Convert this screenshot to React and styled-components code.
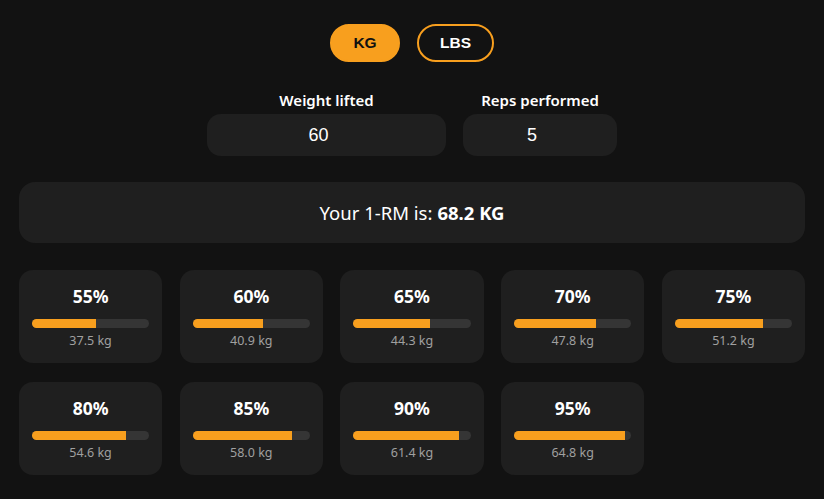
import React, { useState } from 'react';
import styled, { createGlobalStyle } from 'styled-components';

const GlobalStyle = createGlobalStyle`
  html, body {
    margin: 0;
    padding: 0;
    background-color: #121212;
  }
  body {
    font-family: "Noto Sans", "Open Sans", sans-serif;
    color: #ffffff;
  }
`;

const ORANGE = '#f89f1e';
const PERCENTAGES = [55, 60, 65, 70, 75, 80, 85, 90, 95];

// Lander formula
const estimateOneRm = (w, r) => {
  if (!w || !r) return 0;
  if (r === 1) return w;
  return (100 * w) / (101.3 - 2.67123 * r);
};

const Page = styled.div`
  padding: 24px 19px 24px 19px;
  min-height: 499px;
  box-sizing: border-box;
`;

const UnitToggle = styled.div`
  display: flex;
  justify-content: center;
  gap: 17px;
`;

const UnitButton = styled.button`
  height: 38px;
  width: ${props => props.width}px;
  border-radius: 19px;
  border: 2px solid ${ORANGE};
  background-color: ${props => (props.active ? ORANGE : 'transparent')};
  color: ${props => (props.active ? '#111111' : '#ffffff')};
  font-family: "Liberation Sans", Arial, sans-serif;
  font-weight: bold;
  font-size: 15.5px;
  cursor: pointer;
  padding: 0;
`;

const InputRow = styled.div`
  display: flex;
  justify-content: center;
  gap: 17px;
  margin-top: 28px;
`;

const Field = styled.label`
  display: flex;
  flex-direction: column;
  align-items: center;
  width: ${props => props.width}px;
`;

const FieldLabel = styled.span`
  font-size: 15px;
  font-weight: 600;
  line-height: 20px;
  margin-bottom: 4px;
`;

const NumberInput = styled.input`
  width: 100%;
  height: 42px;
  box-sizing: border-box;
  border: none;
  border-radius: 14px;
  background-color: #1f1f1f;
  color: #ffffff;
  text-align: center;
  padding: 0 16px 0 0;
  font-family: "Liberation Sans", Arial, sans-serif;
  font-size: 18px;
  outline: none;
`;

const Result = styled.div`
  margin-top: 26px;
  height: 61px;
  border-radius: 16px;
  background-color: #1f1f1f;
  display: flex;
  align-items: center;
  justify-content: center;
  font-size: 18.5px;
`;

const ResultValue = styled.strong`
  margin-left: 5px;
  font-weight: 700;
`;

const CardGrid = styled.div`
  display: grid;
  grid-template-columns: repeat(5, 1fr);
  column-gap: 17.5px;
  row-gap: 19px;
  margin-top: 27px;
`;

const Card = styled.div`
  height: 93px;
  box-sizing: border-box;
  border-radius: 14px;
  background-color: #1f1f1f;
  padding: 13px 13px 0 13px;
  display: flex;
  flex-direction: column;
  align-items: center;
`;

const CardPercent = styled.div`
  font-size: 17.5px;
  font-weight: 700;
  line-height: 26px;
`;

const Track = styled.div`
  width: 100%;
  height: 9px;
  margin-top: 10px;
  border-radius: 5px;
  background-color: #353535;
  overflow: hidden;
`;

const Fill = styled.div`
  height: 100%;
  background-color: ${ORANGE};
`;

const CardWeight = styled.div`
  margin-top: 4px;
  font-size: 12.5px;
  color: #a0a0a0;
  line-height: 18px;
`;

export default function App() {
  const [unit, setUnit] = useState('kg');
  const [weight, setWeight] = useState('60');
  const [reps, setReps] = useState('5');

  const max = estimateOneRm(parseFloat(weight) || 0, parseFloat(reps) || 0);

  return (
    <Page>
      <GlobalStyle />
      <UnitToggle>
        <UnitButton width={70} active={unit === 'kg'} onClick={() => setUnit('kg')}>
          KG
        </UnitButton>
        <UnitButton width={77} active={unit === 'lbs'} onClick={() => setUnit('lbs')}>
          LBS
        </UnitButton>
      </UnitToggle>

      <InputRow>
        <Field width={239}>
          <FieldLabel>Weight lifted</FieldLabel>
          <NumberInput value={weight} onChange={e => setWeight(e.target.value)} />
        </Field>
        <Field width={154}>
          <FieldLabel>Reps performed</FieldLabel>
          <NumberInput value={reps} onChange={e => setReps(e.target.value)} />
        </Field>
      </InputRow>

      <Result>
        Your 1-RM is:<ResultValue>{max.toFixed(1)} {unit.toUpperCase()}</ResultValue>
      </Result>

      <CardGrid>
        {PERCENTAGES.map(p => (
          <Card key={p}>
            <CardPercent>{p}%</CardPercent>
            <Track>
              <Fill style={{ width: `${p}%` }} />
            </Track>
            <CardWeight>
              {((max * p) / 100).toFixed(1)} {unit}
            </CardWeight>
          </Card>
        ))}
      </CardGrid>
    </Page>
  );
}
